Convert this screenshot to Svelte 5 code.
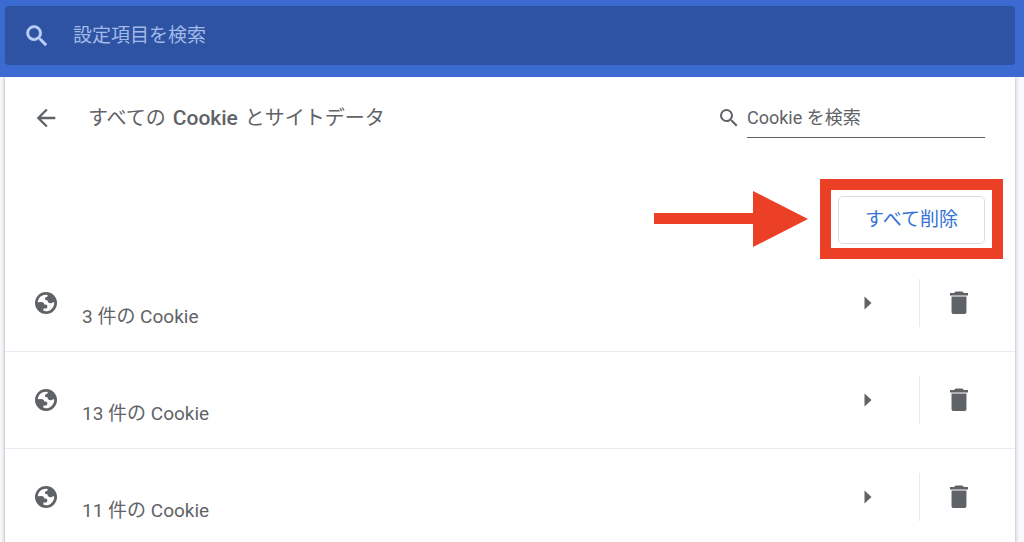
<script lang="ts">
  interface Site {
    id: number;
    name: string;
    cookies: number;
  }

  let sites: Site[] = $state([
    { id: 1, name: '', cookies: 3 },
    { id: 2, name: '', cookies: 13 },
    { id: 3, name: '', cookies: 11 },
  ]);

  let settingsQuery = $state('');
  let cookieQuery = $state('');

  const visible = $derived(
    sites.filter((site) => `${site.name} ${site.cookies}`.includes(cookieQuery.trim()))
  );

  function remove(id: number) {
    sites = sites.filter((site) => site.id !== id);
  }

  function removeAll() {
    sites = [];
  }
</script>

{#snippet searchIcon()}
  <svg class="search-icon" viewBox="0 0 24 24" aria-hidden="true">
    <path
      d="M15.5 14h-.79l-.28-.27A6.47 6.47 0 0 0 16 9.5 6.5 6.5 0 1 0 9.5 16c1.61 0 3.09-.59 4.23-1.57l.27.28v.79l5 4.99L20.49 19l-4.99-5zm-6 0C7.01 14 5 11.99 5 9.5S7.01 5 9.5 5 14 7.01 14 9.5 11.99 14 9.5 14z"
    />
  </svg>
{/snippet}

<div class="page">
  <header class="toolbar">
    <label class="settings-search">
      {@render searchIcon()}
      <input type="text" aria-label="設定項目を検索" placeholder="設定項目を検索" bind:value={settingsQuery} />
    </label>
  </header>

  <main class="card">
    <div class="card-header">
      <button class="icon-button back" aria-label="戻る">
        <svg viewBox="0 0 24 24" aria-hidden="true">
          <path d="M20 11H7.83l5.59-5.59L12 4l-8 8 8 8 1.41-1.41L7.83 13H20v-2z" />
        </svg>
      </button>
      <h1>すべての <strong>Cookie</strong> とサイトデータ</h1>
      <label class="cookie-search">
        {@render searchIcon()}
        <input type="text" aria-label="Cookie を検索" placeholder="Cookie を検索" bind:value={cookieQuery} />
      </label>
    </div>

    <div class="actions">
      <div class="callout">
        <button class="remove-all" onclick={removeAll}>すべて削除</button>
        <span class="callout-frame"></span>
        <svg class="callout-arrow" viewBox="0 0 154 56" aria-hidden="true">
          <path d="M0 22H99V0L154 28L99 56V33H0z" />
        </svg>
      </div>
    </div>

    <ul class="sites">
      {#each visible as site (site.id)}
        <li class="site">
          <svg class="globe" viewBox="0 0 64 64" aria-hidden="true">
            <circle cx="32" cy="32" r="32" />
            <path
              class="globe-sea"
              d="M8 30C9 17 19 8 32 8L37 9L36 14C33 14 29 16 29 20L30 23L36 24C37 32 43 34 49 32C51 30 54 29 56 31C56 45 45 56 31 56L24 54L25 48H31C34 48 36 45 36 42C36 38 34 36 30 36H27C26 31 23 29 18 29Z"
            />
          </svg>
          <div class="details">
            <span class="name">{site.name}</span>
            <span class="count">{site.cookies} 件の Cookie</span>
          </div>
          <button class="icon-button expand" aria-label="詳細を表示">
            <svg viewBox="0 0 24 24" aria-hidden="true">
              <path d="M9 6.500l6 5.500-6 5.500z" />
            </svg>
          </button>
          <div class="trash">
            <button class="icon-button" aria-label="削除" onclick={() => remove(site.id)}>
              <svg viewBox="0 0 24 24" aria-hidden="true">
                <path
                  d="M5.600 6.400v13.300c0 1 .8 1.800 1.800 1.800h9.200c1 0 1.800-.8 1.800-1.800V6.400zM4.300 5.500h15.400V3.500h-3.600c-.3-.9-1-1.400-1.800-1.400H9.700c-.8 0-1.500.5-1.800 1.400H4.300z"
                />
              </svg>
            </button>
          </div>
        </li>
      {/each}
    </ul>
  </main>
</div>

<style>
  :global(body) {
    margin: 0;
    background: #f8f9fd;
  }

  .page {
    height: 100vh;
    display: flex;
    flex-direction: column;
    overflow: hidden;
    color: #5f6368;
    font-family: Roboto, 'Noto Sans CJK JP', sans-serif;
    font-size: 19px;
    line-height: 28px;
  }

  svg {
    display: block;
    flex: none;
    fill: currentColor;
  }

  input {
    flex: 1;
    min-width: 0;
    padding: 0;
    border: none;
    outline: none;
    background: none;
    color: inherit;
    font: inherit;
  }
  input::placeholder {
    color: inherit;
    opacity: 1;
  }

  .toolbar {
    flex: none;
    padding: 6px 9px 12px 5px;
    background: #3b6bd1;
  }

  .settings-search {
    display: flex;
    align-items: center;
    gap: 22px;
    height: 59px;
    padding: 0 18px;
    border-radius: 4px;
    background: #2d53a2;
    color: #a3b9e8;
  }
  .settings-search .search-icon {
    width: 28px;
    height: 28px;
    fill: #bdd0fa;
    stroke: #bdd0fa;
    stroke-width: 0.5;
  }

  .card {
    flex: 1 0 auto;
    margin: 0 9px 0 5px;
    background: #fff;
    box-shadow: 0 0 4px rgba(60, 64, 67, 0.45);
    clip-path: inset(0 -8px);
  }

  .card-header {
    display: flex;
    align-items: center;
    height: 82px;
    padding: 0 30px 0 27px;
  }

  h1 {
    flex: 1;
    margin: 0 0 0 28px;
    font-size: 20px;
    font-weight: 400;
  }
  h1 strong {
    margin: 0 2px;
    font-size: 21px;
    font-weight: 500;
  }

  .icon-button {
    flex: none;
    padding: 0;
    border: none;
    background: none;
    color: inherit;
    cursor: pointer;
  }
  .icon-button svg {
    width: 28px;
    height: 28px;
  }

  .cookie-search {
    display: flex;
    align-items: center;
    gap: 6px;
    width: 268px;
    font-size: 18px;
  }
  .cookie-search .search-icon {
    width: 24px;
    height: 24px;
  }
  .cookie-search input {
    height: 38px;
    border-bottom: 1px solid #5f6368;
  }

  .actions {
    display: flex;
    justify-content: flex-end;
    padding: 37px 30px 11px;
  }

  .callout {
    position: relative;
  }

  .remove-all {
    display: block;
    height: 48px;
    padding: 0 26px;
    border: 1px solid #dadce0;
    border-radius: 5px;
    background: #fff;
    color: #3472d6;
    font: inherit;
    cursor: pointer;
  }

  /* highlight drawn over the button */
  .callout-frame {
    position: absolute;
    inset: -17px -18px -15px;
    border: 11px solid #eb4025;
    pointer-events: none;
  }
  .callout-arrow {
    position: absolute;
    top: -5px;
    right: calc(100% + 30px);
    width: 154px;
    height: 56px;
    fill: #eb4025;
  }

  .sites {
    margin: 0;
    padding: 0;
    list-style: none;
  }

  .site {
    display: flex;
    align-items: center;
    height: 96px;
    padding: 0 42px 0 30px;
  }
  .site + .site {
    border-top: 1px solid #e8eaed;
  }

  .globe {
    width: 22px;
    height: 22px;
  }
  .globe-sea {
    fill: #fff;
  }

  .details {
    flex: 1;
    display: flex;
    flex-direction: column;
    margin-left: 25px;
  }
  .name {
    min-height: 28px;
  }

  .expand {
    margin-right: 37px;
  }

  .trash {
    display: flex;
    align-items: center;
    height: 48px;
    padding-left: 25px;
    border-left: 1px solid #e8eaed;
  }
</style>
